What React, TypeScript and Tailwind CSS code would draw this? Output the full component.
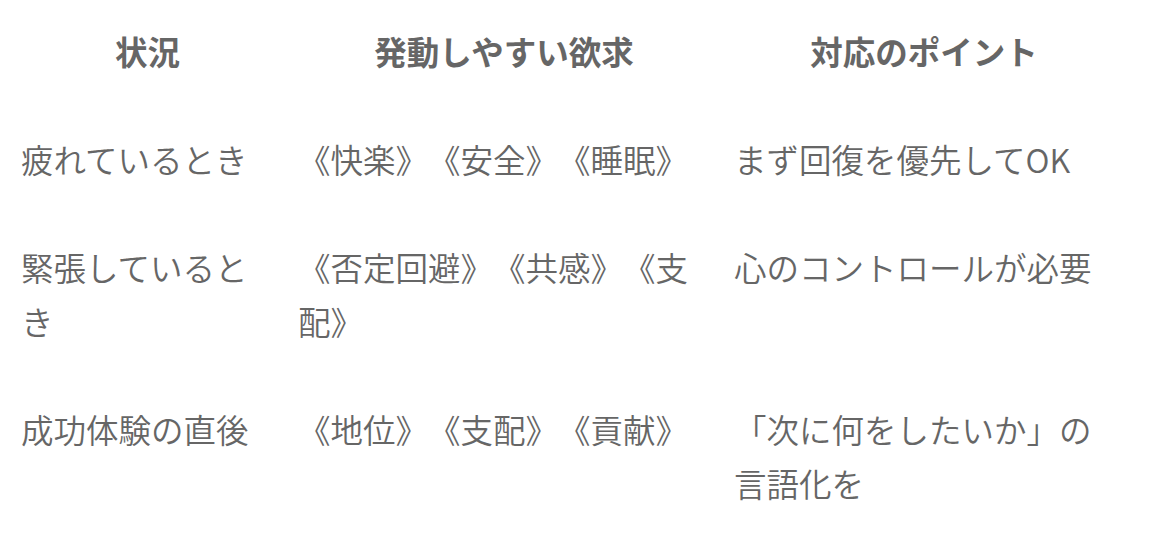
const rows: [string, string, string][] = [
  ["疲れているとき", "《快楽》《安全》《睡眠》", "まず回復を優先してOK"],
  ["緊張しているとき", "《否定回避》《共感》《支配》", "心のコントロールが必要"],
  ["成功体験の直後", "《地位》《支配》《貢献》", "「次に何をしたいか」の言語化を"],
];

export default function App() {
  return (
    <div
      className="w-[1158px] h-[538px] overflow-hidden bg-white pl-[9px] text-[#666666] [text-spacing-trim:space-all]"
      style={{ fontFamily: '"Noto Sans CJK JP", "Noto Sans", sans-serif' }}
    >
      <table className="table-fixed border-collapse text-[32.5px] leading-[54px]">
        <colgroup>
          <col className="w-[277px]" />
          <col className="w-[436px]" />
          <col className="w-[404px]" />
        </colgroup>
        <thead>
          <tr>
            <th className="px-3 pt-[24px] pb-[27px] text-center font-bold">状況</th>
            <th className="px-3 pt-[24px] pb-[27px] text-center font-bold">発動しやすい欲求</th>
            <th className="px-3 pt-[24px] pb-[27px] text-center font-bold">対応のポイント</th>
          </tr>
        </thead>
        <tbody>
          {rows.map((r) => (
            <tr key={r[0]}>
              {r.map((c, i) => (
                <td key={i} className="px-3 py-[27px] align-top text-left font-[350]">
                  {c}
                </td>
              ))}
            </tr>
          ))}
        </tbody>
      </table>
    </div>
  );
}
